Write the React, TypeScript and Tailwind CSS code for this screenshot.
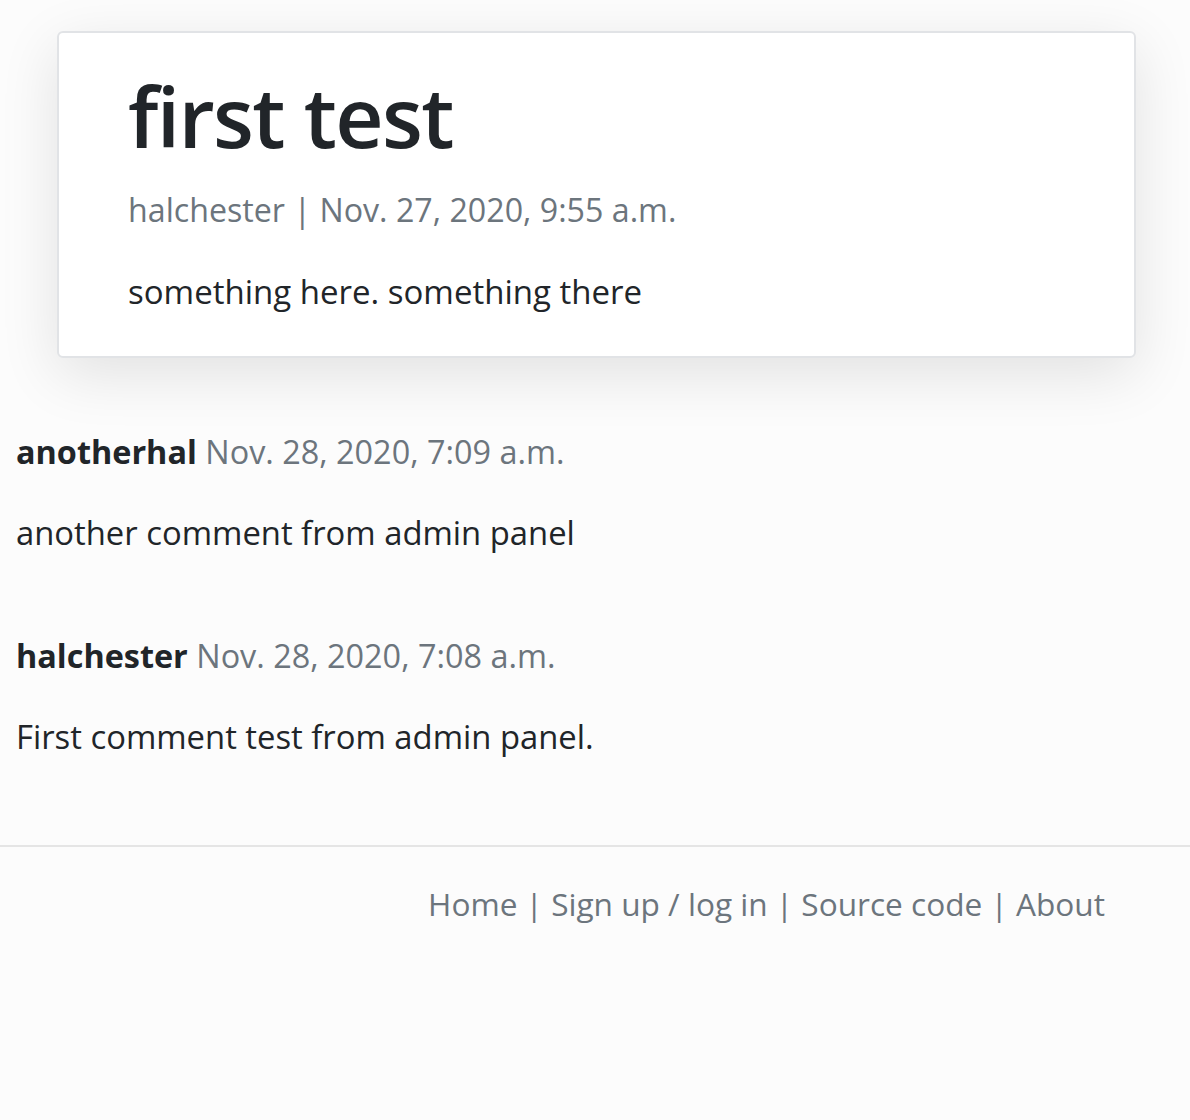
import React from "react";

const comments = [
  {
    author: "anotherhal",
    date: "Nov. 28, 2020, 7:09 a.m.",
    body: "another comment from admin panel",
  },
  {
    author: "halchester",
    date: "Nov. 28, 2020, 7:08 a.m.",
    body: "First comment test from admin panel.",
  },
];

export default function App() {
  return (
    <div
      className="min-h-[1120px] w-full bg-[#fcfcfc] text-[#212529]"
      style={{ fontFamily: '"Open Sans", "Noto Sans", sans-serif' }}
    >
      {/* post card */}
      <div className="pl-[57px] pr-[54px] pt-[31px]">
        <div className="bg-white border-2 border-[#e1e3e6] rounded-[6px] shadow-[0_16px_60px_rgba(0,0,0,0.11)] pl-[69px] pr-8 pt-[33px] pb-[42px]">
          <h1 className="text-[84px] leading-[100px] font-semibold tracking-[-1.7px]">
            first test
          </h1>
          <p className="mt-[22px] text-[32.2px] leading-[44px] text-[#6c757d]">
            halchester | Nov. 27, 2020, 9:55 a.m.
          </p>
          <p className="mt-[38px] text-[33px] leading-[44px]">
            something here. something there
          </p>
        </div>
      </div>

      {/* comments */}
      <div className="flex flex-col gap-[78px] px-4 pt-[71px]">
        {comments.map((c, i) => (
          <div key={i}>
            <p className="text-[32.4px] leading-[44px]">
              <span className="font-bold">{c.author}</span>{" "}
              <span className="text-[#6c757d]">{c.date}</span>
            </p>
            <p className="mt-[38px] text-[32.8px] leading-[44px]">{c.body}</p>
          </div>
        ))}
      </div>

      {/* footer */}
      <div className="border-t-2 border-[#e5e5e5] mt-[86px]">
        <p className="text-right pr-[85px] pt-[35px] text-[31.6px] leading-[44px] text-[#6c757d]">
          Home | Sign up / log in | Source code | About
        </p>
      </div>
    </div>
  );
}
